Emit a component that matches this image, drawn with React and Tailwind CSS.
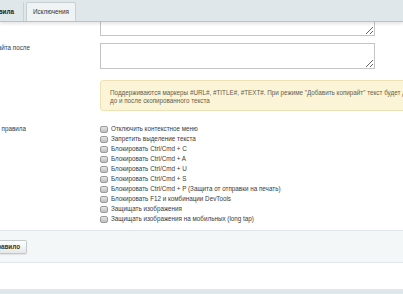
import React from "react";

const items = [
  "Отключить контекстное меню",
  "Запретить выделение текста",
  "Блокировать Ctrl/Cmd + C",
  "Блокировать Ctrl/Cmd + A",
  "Блокировать Ctrl/Cmd + U",
  "Блокировать Ctrl/Cmd + S",
  "Блокировать Ctrl/Cmd + P (Защита от отправки на печать)",
  "Блокировать F12 и комбинации DevTools",
  "Защищать изображения",
  "Защищать изображения на мобильных (long tap)",
];

export default function App() {
  return (
    <div className="w-[403px] h-[294px] overflow-hidden bg-white flex flex-col font-['Liberation_Sans',Arial,sans-serif] text-[#3a3a3a] text-[6.3px]">
      <div className="relative z-10 h-[22px] shrink-0 bg-[#dfe7ea] border-b border-[#b9c3c7] shadow-[0_2px_3px_rgba(0,0,0,0.10)] flex items-end">
        <div className="w-[24px] h-[19px] overflow-hidden flex justify-end items-center pr-[9px] font-bold text-[#222] whitespace-nowrap border-r border-[#c8d1d4]">
          Правила
        </div>
        <div className="ml-[2px] w-[50px] h-[19px] bg-[#eff3f4] border border-b-0 border-[#c6cfd2] rounded-t-[2px] flex items-center justify-center text-[#333] whitespace-nowrap">
          Исключения
        </div>
      </div>

      <div className="flex-1 flex flex-col overflow-hidden">
        <div className="flex shrink-0">
          <div className="w-[100px]" />
          <textarea className="-mt-[16px] w-[275px] h-[30px] border border-[#c4c4c4] bg-white resize-y outline-none" />
        </div>

        <div className="flex mt-[7px] shrink-0">
          <div className="w-[100px] pt-[1px]">
            <div className="w-[30px] overflow-hidden flex justify-end whitespace-nowrap leading-[8px]">
              Текст копирайта после
            </div>
          </div>
          <textarea className="w-[275px] h-[26px] border border-[#c4c4c4] bg-white resize-y outline-none" />
        </div>

        <div className="flex mt-[11px] shrink-0">
          <div className="w-[100px] shrink-0" />
          <div className="w-[340px] shrink-0 h-[31px] bg-[#fcf4d6] border border-[#ece2b6] rounded-l-[3px] pl-[9px] pt-[8px] leading-[8px] text-[#625f50] whitespace-nowrap">
            <div>Поддерживаются маркеры #URL#, #TITLE#, #TEXT#. При режиме "Добавить копирайт" текст будет добавлен</div>
            <div>до и после скопированного текста</div>
          </div>
        </div>

        <div className="flex mt-[13px] shrink-0">
          <div className="w-[100px]">
            <div className="w-[26px] overflow-hidden flex justify-end whitespace-nowrap leading-[10px]">
              Применять правила
            </div>
          </div>
          <div className="flex flex-col">
            {items.map((t) => (
              <div key={t} className="h-[10px] flex items-center whitespace-nowrap">
                <span className="w-[8px] h-[7px] rounded-[2px] border border-[#9c9c9c] bg-gradient-to-b from-[#e6e6e6] to-[#bdbdbd] mr-[3px] shrink-0" />
                <span className="leading-[10px]">{t}</span>
              </div>
            ))}
          </div>
        </div>

        <div className="mt-[6px] shrink-0 h-[33px] bg-[#f4f7f8] border-t border-b border-[#e1e7e9] flex items-center">
          <div className="w-[27px] h-[14px] overflow-hidden flex justify-end items-center pr-[6px] bg-gradient-to-b from-white to-[#e4e8e9] border border-l-0 border-[#c3cacc] rounded-r-[2px] shadow-[0_1px_1px_rgba(0,0,0,0.08)] font-bold text-[#333] whitespace-nowrap">
            Добавить правило
          </div>
        </div>

        <div className="h-[26px] shrink-0 bg-white" />
        <div className="flex-1 bg-[#dfe7ea]" />
      </div>
    </div>
  );
}
